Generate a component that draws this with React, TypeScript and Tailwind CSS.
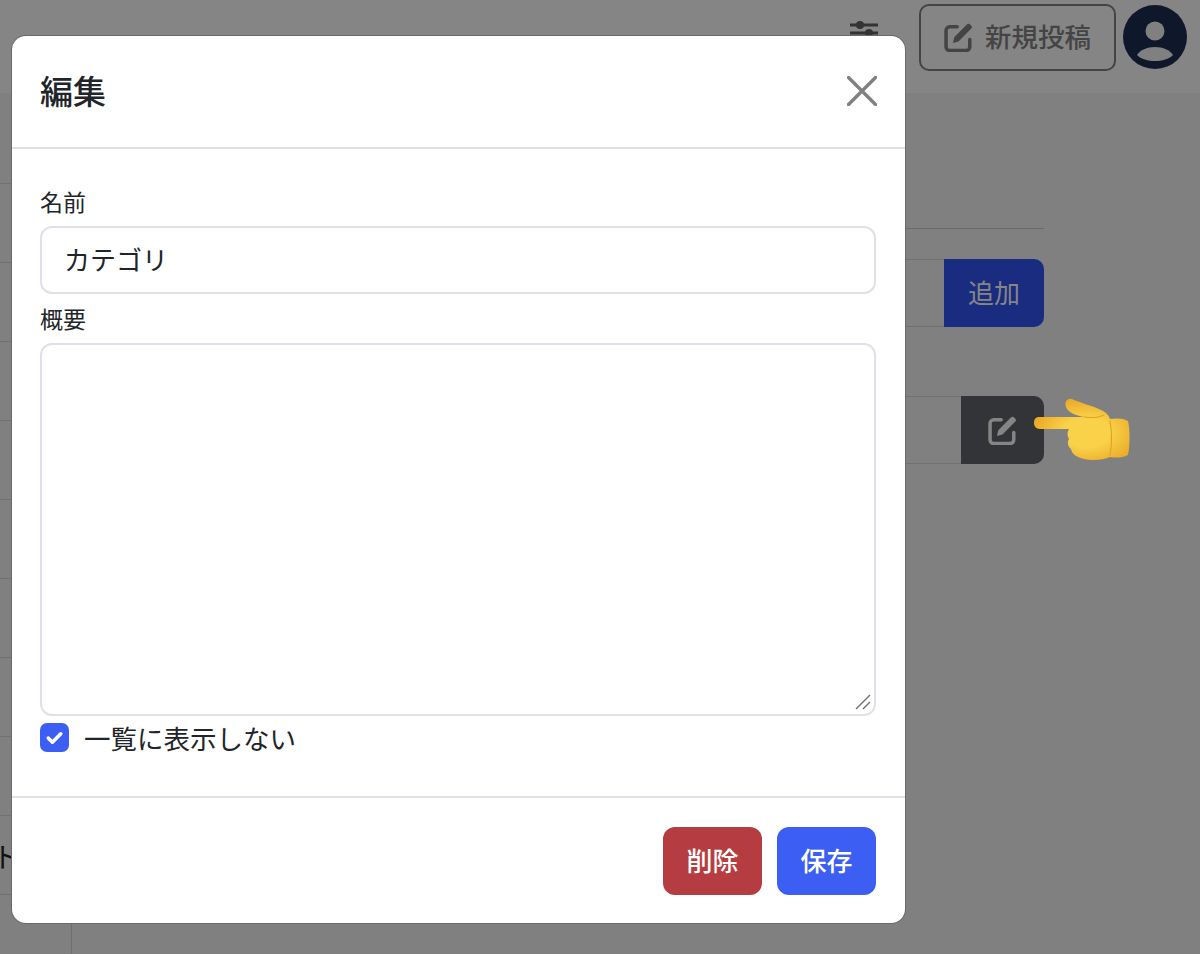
const font = { fontFamily: '"Noto Sans CJK JP", "Liberation Sans", sans-serif' };
const rowIds = [0, 1, 2, 3, 4, 5, 6, 7, 8, 9];

function EditIcon({ className }: { className: string }) {
  return (
    <svg viewBox="2.5 2 19.8 19.8" className={className} fill="none">
      <path d="M11.5 4.6H6.4A2.5 2.5 0 0 0 3.9 7.1v11.2a2.5 2.5 0 0 0 2.5 2.5h11.2a2.5 2.5 0 0 0 2.5-2.5v-5.1" stroke="currentColor" strokeWidth="2.4" strokeLinecap="round" />
      <path d="M8.6 15.6l.9-3.9 8.6-8.6a1.6 1.6 0 0 1 2.3 0l.6.6a1.6 1.6 0 0 1 0 2.3l-8.6 8.6z" fill="currentColor" />
    </svg>
  );
}

function PointingHand() {
  return (
    <svg viewBox="0 0 96 64" className="absolute left-[1034px] top-[398px] h-[64px] w-[96px]">
      <defs>
        <radialGradient id="hand" cx="0.55" cy="0.55" r="0.6">
          <stop offset="0.4" stopColor="#f9d24a" />
          <stop offset="1" stopColor="#eaa522" />
        </radialGradient>
      </defs>
      <path d="M5 19H50C44 18 34 15 32 9C30 3 34 0 38 1C46 5 60 8 69 13C73 15 75 18 76 21C82 20 90 20 94 23C96 30 96 48 94 57C88 60 82 60 76 59C70 62 58 63 50 61C42 59 38 56 37 51C34 49 33 44 35 41C33 38 33 34 35 31H6C2 31 0 28 0 25C0 21 2 19 5 19Z" fill="url(#hand)" />
      <path d="M50 19C58 20 64 20 70 17M76 23C78 34 78 46 76 57" stroke="#e09c20" strokeWidth="1" fill="none" strokeLinecap="round" />
    </svg>
  );
}

export default function App() {
  return (
    <div className="relative flex h-[954px] w-[1200px] flex-col overflow-hidden bg-[#808080] text-[#212529]" style={font}>
      {/* Page behind the dialog */}
      <header className="flex h-[93px] shrink-0 items-start justify-end bg-[#858585] pt-[4px] pr-[13px]">
        <svg viewBox="0 0 32 24" className="mt-[14px] mr-[39px] h-[24px] w-[32px] text-[#333]">
          <path d="M2 7h28M2 15h28" stroke="currentColor" strokeWidth="3" />
          <circle cx="12" cy="7" r="4" fill="currentColor" />
          <circle cx="21" cy="15" r="4" fill="currentColor" />
        </svg>
        <button className="flex h-[67px] w-[197px] items-center justify-center gap-[11px] rounded-[10px] border-2 border-[#444] text-[26.5px] font-medium text-[#444]">
          <EditIcon className="h-[29px] w-[29px]" />
          <span className="mb-[4px] ml-[1px]">新規投稿</span>
        </button>
        <div className="mt-[1px] ml-[7px] flex h-[64px] w-[64px] items-center justify-center overflow-hidden rounded-full bg-[#0f172a]">
          <svg viewBox="0 0 64 64" className="h-[64px] w-[64px]">
            <circle cx="32" cy="26" r="9.5" fill="#808080" />
            <path d="M14 50c3-5 10-8 18-8s15 3 18 8c-4 4-11 6-18 6s-14-2-18-6z" fill="#808080" />
          </svg>
        </div>
      </header>

      <div className="flex flex-1">
        <aside className="w-[72px] border-r border-[#6f6f6f] pt-[12px]">
          {rowIds.map((id) => (
            <div key={id} className="relative h-[79px] border-b border-[#707070]">
              {id === 9 && <span className="absolute top-[20px] left-[-8px] text-[28px] leading-[40px] text-[#111]">ト</span>}
            </div>
          ))}
        </aside>
        <main className="flex-1 pt-[135px] pr-[156px]">
          <div className="border-b border-[#6a6a6a]" />
          <div className="mt-[30px] flex h-[68px] justify-end rounded-[10px] border-y border-[#707070]">
            <button className="-my-px w-[100px] rounded-r-[10px] bg-[#1a2c80] pb-[4px] text-[26px] text-[#858585]">追加</button>
          </div>
          <div className="mt-[69px] flex h-[68px] justify-end rounded-[10px] border-y border-[#707070]">
            <button className="-my-px flex w-[83px] items-center justify-center rounded-r-[10px] bg-[#333438] text-[#858585]">
              <EditIcon className="h-[29px] w-[29px]" />
            </button>
          </div>
        </main>
      </div>

      <PointingHand />

      {/* Dialog */}
      <div className="absolute top-[36px] left-[12px] flex h-[887px] w-[893px] flex-col rounded-[14px] bg-white shadow-[0_0_0_1px_#6a6a6a]">
        <div className="flex h-[113px] shrink-0 items-start justify-between border-b-2 border-[#dee2e6] pt-[29px] pr-[28px] pl-[28px]">
          <h2 className="text-[33px] leading-[50px] font-medium">編集</h2>
          <svg viewBox="0 0 30 30" className="mt-[11px] h-[30px] w-[30px] text-[#808080]">
            <path d="M1.5 1.5l27 27M28.5 1.5l-27 27" stroke="currentColor" strokeWidth="3.4" strokeLinecap="round" />
          </svg>
        </div>

        <div className="flex flex-1 flex-col pt-[36px] pr-[29px] pl-[28px]">
          <label className="text-[23px] leading-[32px]">名前</label>
          <input
            readOnly
            value="カテゴリ"
            className="mt-[9px] h-[68px] rounded-[12px] border-2 border-[#e0e1e8] px-[22px] pb-[3px] text-[26px] outline-none"
            style={font}
          />
          <label className="mt-[8px] text-[23px] leading-[32px]">概要</label>
          <div className="relative mt-[9px] h-[373px]">
            <textarea readOnly className="h-full w-full resize-none rounded-[12px] border-2 border-[#e0e0ea] outline-none" />
            <svg viewBox="0 0 16 16" className="absolute right-[5px] bottom-[6px] h-[16px] w-[16px]">
              <path d="M1 15L15 1M8 15L15 8" stroke="#6f6f6f" strokeWidth="1.4" />
            </svg>
          </div>
          <div className="mt-[4px] flex items-start gap-[15px]">
            <div className="mt-[3px] flex h-[29px] w-[29px] items-center justify-center rounded-[7px] bg-[#3c5ef2]">
              <svg viewBox="0 0 20 20" className="h-[21px] w-[21px]">
                <path d="M4 10.5l4 4 8-8" stroke="#fff" strokeWidth="3.4" fill="none" strokeLinecap="round" strokeLinejoin="round" />
              </svg>
            </div>
            <span className="text-[26.5px] leading-[36px]">一覧に表示しない</span>
          </div>
        </div>

        <div className="flex h-[127px] shrink-0 items-start justify-end gap-[15px] border-t-2 border-[#dee2e6] pt-[29px] pr-[29px]">
          <button className="h-[68px] w-[99px] rounded-[12px] bg-[#b53d41] pb-[3px] text-[26px] font-medium text-white">削除</button>
          <button className="h-[68px] w-[99px] rounded-[12px] bg-[#3c5ef2] pb-[3px] text-[26px] font-medium text-white">保存</button>
        </div>
      </div>
    </div>
  );
}
